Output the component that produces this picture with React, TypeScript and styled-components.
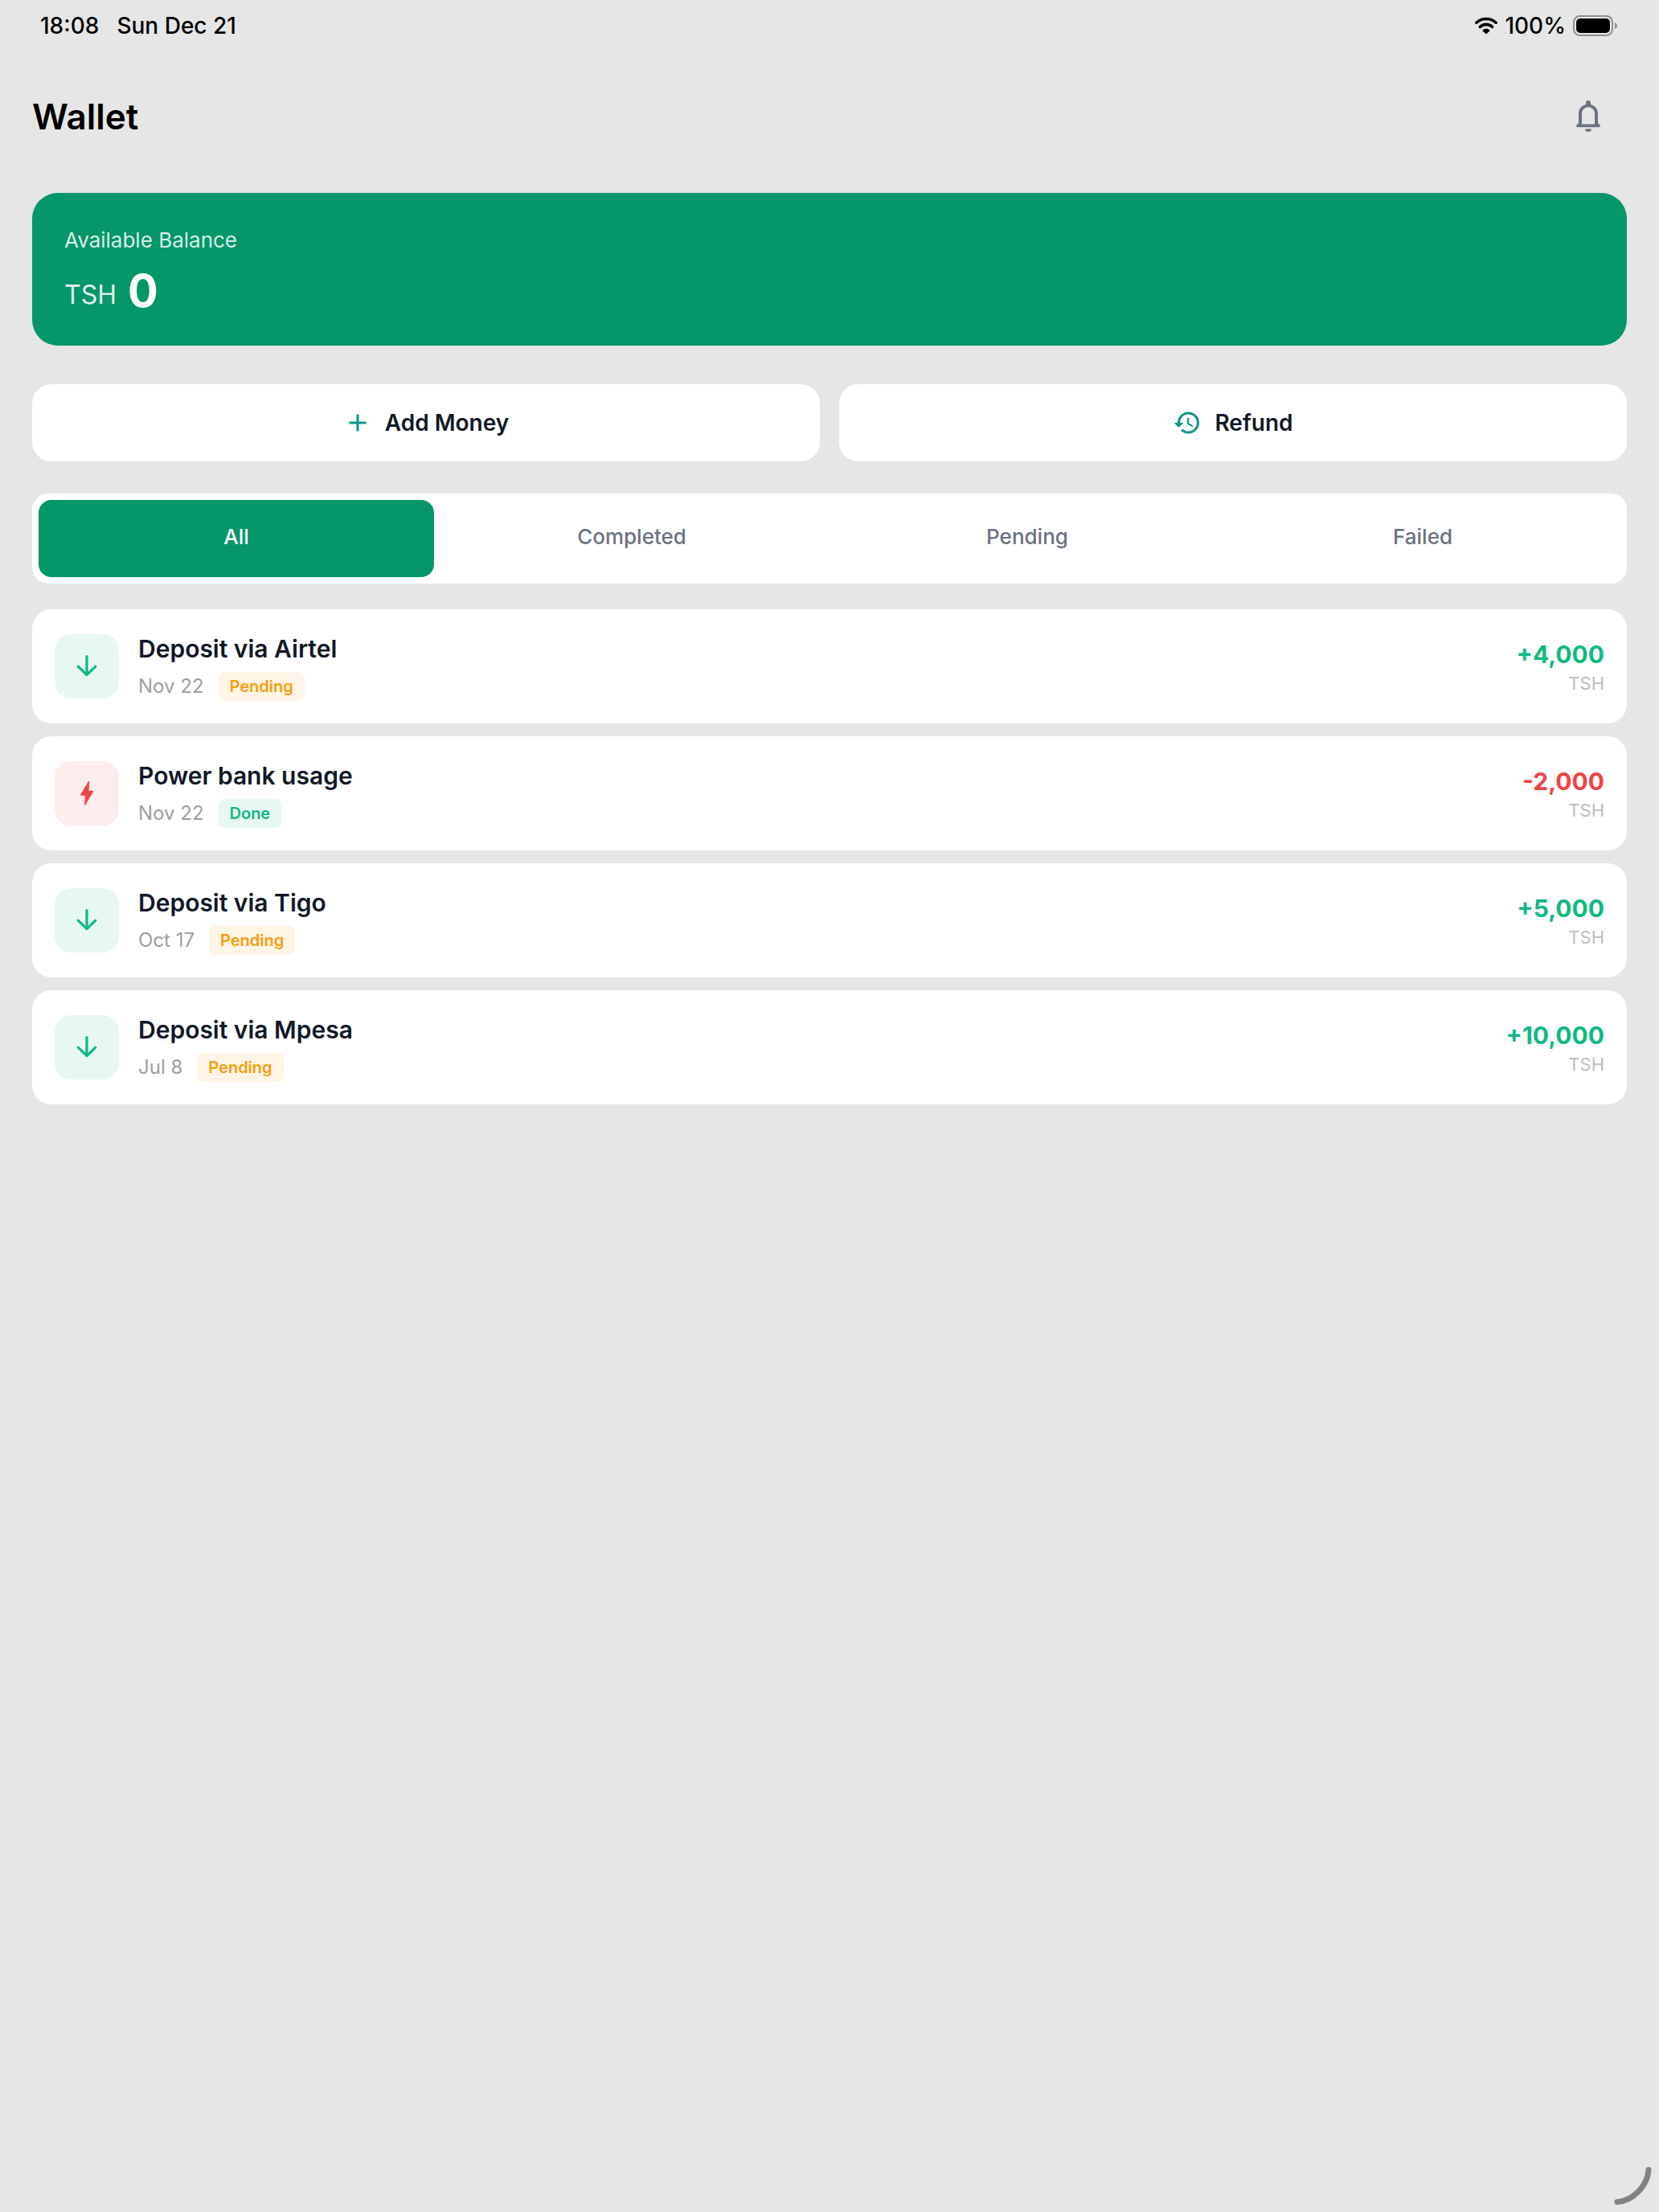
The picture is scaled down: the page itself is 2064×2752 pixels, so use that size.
import React, { useState } from "react"
import { MdAdd, MdHistory } from "react-icons/md"
import styled, { createGlobalStyle } from "styled-components"

const GlobalStyle = createGlobalStyle`
    * {
        box-sizing: border-box;
    }

    body {
        margin: 0;
        background: #e6e6e6;
        color: #111827;
        font-family: Inter, "Liberation Sans", sans-serif;
    }

    button {
        font: inherit;
        border: 0;
        cursor: pointer;
    }
`

const Screen = styled.div`
    min-height: 100vh;
`

const StatusBar = styled.div`
    display: flex;
    justify-content: space-between;
    align-items: center;
    height: 64px;
    padding: 10px 52px 10px 50px;
    color: #000;
    font-size: 28px;
    font-weight: 500;
    line-height: 44px;
`

const StatusGroup = styled.div<{ $gap: number }>`
    display: flex;
    align-items: center;
    gap: ${(p) => p.$gap}px;
`

const Header = styled.header`
    display: flex;
    justify-content: space-between;
    align-items: center;
    padding: 53px 40px 67px;
`

const Title = styled.h1`
    margin: 0;
    color: #000;
    font-size: 44px;
    font-weight: 600;
    line-height: 56px;
`

const BellButton = styled.button`
    display: flex;
    padding: 4px 24px;
    background: none;
    color: #6b7280;
`

const Content = styled.main`
    display: flex;
    flex-direction: column;
    padding: 0 40px 40px;
`

const BalanceCard = styled.section`
    display: flex;
    flex-direction: column;
    gap: 16px;
    padding: 40px;
    border-radius: 32px;
    background: #059669;
    color: #fff;
`

const BalanceLabel = styled.div`
    color: rgba(255, 255, 255, 0.85);
    font-size: 26px;
    line-height: 38px;
`

const BalanceRow = styled.div`
    display: flex;
    align-items: flex-end;
    gap: 14px;
`

const BalanceCurrency = styled.span`
    color: rgba(255, 255, 255, 0.9);
    font-size: 32px;
    line-height: 46px;
`

const BalanceValue = styled.span`
    font-size: 56px;
    font-weight: 700;
    line-height: 56px;
`

const Actions = styled.div`
    display: grid;
    grid-template-columns: 1fr 1fr;
    gap: 24px;
    margin-top: 48px;
`

const ActionButton = styled.button`
    display: flex;
    justify-content: center;
    align-items: center;
    gap: 16px;
    padding: 28px;
    border-radius: 24px;
    background: #fff;
    color: #111827;
    font-size: 28px;
    font-weight: 600;
    line-height: 40px;

    svg {
        color: #0d9488;
    }
`

const Tabs = styled.div`
    display: grid;
    grid-template-columns: repeat(4, 1fr);
    margin-top: 40px;
    padding: 8px;
    border-radius: 20px;
    background: #fff;
`

const Tab = styled.button<{ $active: boolean }>`
    padding: 28px 16px 32px;
    border-radius: 16px;
    background: ${(p) => (p.$active ? "#059669" : "transparent")};
    color: ${(p) => (p.$active ? "#fff" : "#6b7280")};
    font-size: 26px;
    font-weight: 500;
    line-height: 36px;
`

const List = styled.ul`
    display: flex;
    flex-direction: column;
    gap: 16px;
    margin: 32px 0 0;
    padding: 0;
    list-style: none;
`

const Row = styled.li`
    display: flex;
    align-items: center;
    gap: 24px;
    padding: 28px;
    border-radius: 24px;
    background: #fff;
`

const IconBox = styled.div<{ $out: boolean }>`
    display: flex;
    justify-content: center;
    align-items: center;
    width: 80px;
    height: 80px;
    border-radius: 20px;
    background: ${(p) => (p.$out ? "#fdecec" : "#e7f8f2")};
    color: ${(p) => (p.$out ? "#ef4444" : "#10b981")};
`

const Details = styled.div`
    display: flex;
    flex-direction: column;
    flex: 1;
    gap: 8px;
`

const RowTitle = styled.div`
    font-size: 30px;
    font-weight: 600;
    line-height: 42px;
`

const Meta = styled.div`
    display: flex;
    align-items: center;
    gap: 18px;
    color: #9e9e9e;
    font-size: 24px;
    line-height: 36px;
`

const Badge = styled.span<{ $done: boolean }>`
    padding: 0 14px;
    border-radius: 8px;
    background: ${(p) => (p.$done ? "#e7f8f2" : "#fff4e5")};
    color: ${(p) => (p.$done ? "#10b981" : "#f59e0b")};
    font-size: 20px;
    font-weight: 600;
`

const AmountColumn = styled.div`
    text-align: right;
`

const Amount = styled.div<{ $out: boolean }>`
    color: ${(p) => (p.$out ? "#ef4444" : "#10b981")};
    font-size: 30px;
    font-weight: 700;
    line-height: 42px;
`

const Currency = styled.div`
    color: #bdbdbd;
    font-size: 22px;
    line-height: 30px;
`

const CornerMark = styled.svg`
    position: fixed;
    right: 0;
    bottom: 0;
`

const WifiIcon = () => (
    <svg width="28" height="22" viewBox="1 0 28 22" fill="none">
        <path d="M2.8 7.2a18 18 0 0 1 24.4 0" stroke="currentColor" strokeWidth="3.6" strokeLinecap="round" />
        <path d="M7.4 12.4a11 11 0 0 1 15.2 0" stroke="currentColor" strokeWidth="3.6" strokeLinecap="round" />
        <path
            d="M15 14.8c1.8 0 3.2.6 4.3 1.6.3.3.3.7 0 1l-3.7 3.5c-.4.4-.8.4-1.2 0l-3.7-3.5c-.3-.3-.3-.7 0-1 1.1-1 2.5-1.6 4.3-1.6z"
            fill="currentColor"
        />
    </svg>
)

const BatteryIcon = () => (
    <svg width="55" height="26" viewBox="0 0 55 26" fill="none">
        <rect x="1" y="1" width="48" height="24" rx="7.5" stroke="#8e8e8e" strokeWidth="2" />
        <rect x="4" y="4" width="42" height="18" rx="5" fill="currentColor" />
        <path d="M52 9c1.8.7 3 2.2 3 4s-1.2 3.300-3 4z" fill="#8e8e8e" />
    </svg>
)

const BellIcon = () => (
    <svg width="48" height="48" viewBox="0 0 48 48">
        <path
            fillRule="evenodd"
            d="M24 4a3 3 0 0 0-3 3v2C15.600 10.300 12 14.700 12 20.500V32l-2.300 2.200c-1.300 1.300-.6 3 1 3h26.600c1.600 0 2.300-1.700 1-3L36 32V20.500c0-5.800-3.600-10.200-9-11.500V7a3 3 0 0 0-3-3zM16 33.500V20.500c0-4.700 3.400-8.300 8-8.300s8 3.600 8 8.300v13z"
            fill="currentColor"
        />
        <path d="M20 39.500h8a4 3.500 0 0 1-8 0z" fill="currentColor" />
    </svg>
)

const DownIcon = () => (
    <svg width="44" height="44" viewBox="0 0 44 44" fill="none">
        <path
            d="M22 9.500V32.700M11.200 22.200 22 32.700l10.800-10.500"
            stroke="currentColor"
            strokeWidth="3.2"
            strokeLinecap="round"
            strokeLinejoin="round"
        />
    </svg>
)

const BoltIcon = () => (
    <svg width="44" height="44" viewBox="0 0 44 44">
        <path
            d="M23.800 7.200 14.100 23.800c-.3.600 0 1 .5 1h5.300l-.9 11.300c0 .8.800 1 1.200.4l9.900-16.800c.3-.6 0-1-.5-1h-5.200l.9-11.200c0-.8-1.100-1-1.500-.3z"
            fill="currentColor"
        />
    </svg>
)

const tabs = ["All", "Completed", "Pending", "Failed"]

const transactions = [
    { title: "Deposit via Airtel", date: "Nov 22", status: "Pending", amount: "+4,000" },
    { title: "Power bank usage", date: "Nov 22", status: "Done", amount: "-2,000" },
    { title: "Deposit via Tigo", date: "Oct 17", status: "Pending", amount: "+5,000" },
    { title: "Deposit via Mpesa", date: "Jul 8", status: "Pending", amount: "+10,000" },
]

const statusForTab: Record<string, string> = {
    Completed: "Done",
    Pending: "Pending",
    Failed: "Failed",
}

function App() {
    const [tab, setTab] = useState("All")

    const visible = transactions.filter(
        (t) => tab === "All" || t.status === statusForTab[tab]
    )

    return (
        <Screen>
            <GlobalStyle />
            <StatusBar>
                <StatusGroup $gap={22}>
                    <span>18:08</span>
                    <span>Sun Dec 21</span>
                </StatusGroup>
                <StatusGroup $gap={9}>
                    <WifiIcon />
                    <span>100%</span>
                    <BatteryIcon />
                </StatusGroup>
            </StatusBar>
            <Header>
                <Title>Wallet</Title>
                <BellButton aria-label="Notifications">
                    <BellIcon />
                </BellButton>
            </Header>
            <Content>
                <BalanceCard>
                    <BalanceLabel>Available Balance</BalanceLabel>
                    <BalanceRow>
                        <BalanceCurrency>TSH</BalanceCurrency>
                        <BalanceValue>0</BalanceValue>
                    </BalanceRow>
                </BalanceCard>
                <Actions>
                    <ActionButton>
                        <MdAdd size={36} />
                        Add Money
                    </ActionButton>
                    <ActionButton>
                        <MdHistory size={36} />
                        Refund
                    </ActionButton>
                </Actions>
                <Tabs role="tablist">
                    {tabs.map((name) => (
                        <Tab
                            key={name}
                            role="tab"
                            aria-selected={tab === name}
                            $active={tab === name}
                            onClick={() => setTab(name)}
                        >
                            {name}
                        </Tab>
                    ))}
                </Tabs>
                <List>
                    {visible.map((t) => {
                        const out = t.amount.startsWith("-")
                        return (
                            <Row key={t.title}>
                                <IconBox $out={out}>
                                    {out ? <BoltIcon /> : <DownIcon />}
                                </IconBox>
                                <Details>
                                    <RowTitle>{t.title}</RowTitle>
                                    <Meta>
                                        <span>{t.date}</span>
                                        <Badge $done={t.status === "Done"}>{t.status}</Badge>
                                    </Meta>
                                </Details>
                                <AmountColumn>
                                    <Amount $out={out}>{t.amount}</Amount>
                                    <Currency>TSH</Currency>
                                </AmountColumn>
                            </Row>
                        )
                    })}
                </List>
            </Content>
            <CornerMark width="60" height="60" viewBox="0 0 60 60" fill="none">
                <path d="M47 7.500C46 27 28 46 8 47.500" stroke="#828282" strokeWidth="7" strokeLinecap="round" />
            </CornerMark>
        </Screen>
    )
}

export default App
